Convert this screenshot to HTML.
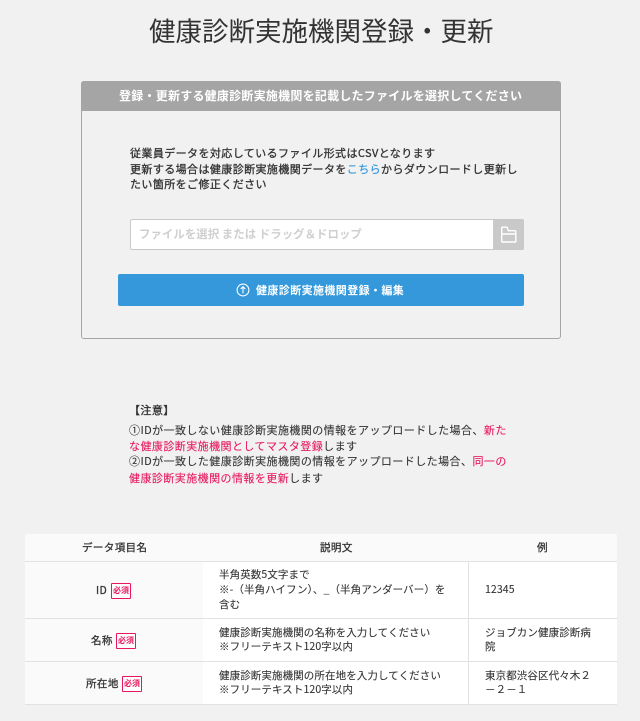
<!DOCTYPE html>
<html lang="ja"><head><meta charset="utf-8">
<style>
*{box-sizing:border-box}
html,body{margin:0;padding:0}
body{width:640px;height:721px;overflow:hidden;background:#f1f1f1;position:relative;font-family:"Noto Sans CJK JP","Liberation Sans",sans-serif;color:#333}
.a{position:absolute;white-space:nowrap}
.t{font-size:11px;letter-spacing:.41px;line-height:16px;height:16px}
.s{font-size:10.5px;letter-spacing:.1px;-webkit-text-stroke:.1px #333}
.b{-webkit-text-stroke:.3px #333}
.r{color:#e8175d;-webkit-text-stroke:.1px #e8175d}
.box{position:absolute;background:#fafafa}
.badge{position:absolute;width:20px;height:16px;border:1px solid #e8175d;border-radius:1px;background:#fff;color:#e8175d;font-size:8px;line-height:14px;text-align:center;font-weight:700;white-space:nowrap;overflow:hidden}
.h{position:absolute;background:#e2e2e2;height:1px;left:25px;width:592px}
</style></head><body>
<div class="a" style="left:149px;top:11px;font-size:26.5px;line-height:38px;color:#333">健康診断実施機関登録・更新</div>

<div class="a" style="left:81px;top:81px;width:480px;height:258px;border:1px solid #a5a5a5;border-radius:3px"></div>
<div class="a" style="left:81px;top:81px;width:480px;height:30px;background:#a5a5a5;border-radius:3px 3px 0 0"></div>
<div class="a" style="left:119px;top:87px;font-size:12px;letter-spacing:.24px;line-height:18px;color:#fff;font-weight:700">登録・更新する健康診断実施機関を記載したファイルを選択してください</div>

<div class="a t b" style="left:130px;top:145px">従業員データを対応しているファイル形式はCSVとなります</div>
<div class="a t b" style="left:130px;top:161px">更新する場合は健康診断実施機関データを<span style="color:#3498db;-webkit-text-stroke:.2px #3498db">こちら</span>からダウンロードし更新し</div>
<div class="a t b" style="left:130px;top:176px">たい箇所をご修正ください</div>

<div class="a" style="left:130px;top:219px;width:394px;height:31px;background:#fff;border:1px solid #c9c9c9;border-radius:2px"></div>
<div class="a" style="left:493px;top:219px;width:31px;height:31px;background:#c9c9c9;border-radius:0 2px 2px 0"></div>
<svg class="a" style="left:500px;top:226px" width="17" height="17" viewBox="0 0 17 17" fill="none" stroke="#fff" stroke-width="1.4" stroke-linejoin="round"><path d="M1.7 8V2C1.7 1.5 2 1.2 2.5 1.2H6.5C7 1.2 7.4 1.5 7.5 2L8.2 4.7H15C15.5 4.7 15.8 5 15.8 5.5V15.2C15.8 15.7 15.5 16 15 16H2.5C2 16 1.7 15.7 1.7 15.2V8H15.8"/></svg>
<div class="a" style="left:139px;top:226px;font-size:11.4px;letter-spacing:.06px;line-height:16px;color:#cfcfcf;font-weight:700">ファイルを選択 または ドラッグ＆ドロップ</div>

<div class="a" style="left:118px;top:274px;width:406px;height:32px;background:#3498db;border-radius:2px"></div>
<svg class="a" style="left:236px;top:283px" width="14" height="14" viewBox="0 0 14 14" fill="none" stroke="#fff" stroke-width="1.1"><circle cx="7" cy="7" r="5.9"/><path d="M7 10.4V3.8M4.7 6L7 3.7L9.3 6"/></svg>
<div class="a" style="left:256px;top:282px;font-size:11px;letter-spacing:.4px;line-height:16px;color:#fff;font-weight:700">健康診断実施機関登録・編集</div>

<div class="a t b" style="left:129px;top:402px">【注意】</div>
<div class="a t" style="left:129px;top:422px;letter-spacing:.44px;-webkit-text-stroke:.1px #333">①IDが一致しない健康診断実施機関の情報をアップロードした場合、<span class="r">新た</span></div>
<div class="a t" style="left:129px;top:438px;letter-spacing:.44px;-webkit-text-stroke:.1px #333"><span class="r">な健康診断実施機関としてマスタ登録</span>します</div>
<div class="a t" style="left:129px;top:453px;letter-spacing:.44px;-webkit-text-stroke:.1px #333">②IDが一致した健康診断実施機関の情報をアップロードした場合、<span class="r">同一の</span></div>
<div class="a t" style="left:129px;top:470px;letter-spacing:.44px;-webkit-text-stroke:.1px #333"><span class="r">健康診断実施機関の情報を更新</span>します</div>

<div class="box" style="left:25px;top:534px;width:592px;height:171px;background:#fafafa;border-radius:2px"></div>
<div class="box" style="left:203px;top:562px;width:414px;height:143px;background:#fff"></div>
<div class="h" style="top:561px"></div>
<div class="h" style="top:618px"></div>
<div class="h" style="top:661px"></div>
<div class="h" style="top:704px"></div>
<div class="a" style="left:468px;top:562px;width:1px;height:142px;background:#e2e2e2"></div>

<div class="a t b" style="left:82px;top:540px;font-size:10.5px">データ項目名</div>
<div class="a t b" style="left:320px;top:540px;font-size:10.5px">説明文</div>
<div class="a t b" style="left:537px;top:540px;font-size:10.5px">例</div>

<div class="a t b" style="left:96px;top:583px;font-size:10.5px">ID</div>
<div class="badge" style="left:111px;top:583px">必須</div>
<div class="a t b" style="left:91px;top:633px;font-size:10.5px">名称</div>
<div class="badge" style="left:116px;top:633px">必須</div>
<div class="a t b" style="left:86px;top:676px;font-size:10.5px">所在地</div>
<div class="badge" style="left:122px;top:676px">必須</div>

<div class="a t s" style="left:219px;top:567px">半角英数5文字まで</div>
<div class="a t s" style="left:219px;top:582px">※-（半角ハイフン）、_（半角アンダーバー）を</div>
<div class="a t s" style="left:219px;top:597px">含む</div>
<div class="a t s" style="left:219px;top:625px">健康診断実施機関の名称を入力してください</div>
<div class="a t s" style="left:219px;top:639px">※フリーテキスト120字以内</div>
<div class="a t s" style="left:219px;top:668px">健康診断実施機関の所在地を入力してください</div>
<div class="a t s" style="left:219px;top:682px">※フリーテキスト120字以内</div>

<div class="a t s" style="left:485px;top:582px">12345</div>
<div class="a t s" style="left:485px;top:625px">ジョブカン健康診断病</div>
<div class="a t s" style="left:485px;top:639px">院</div>
<div class="a t s" style="left:485px;top:668px">東京都渋谷区代々木２</div>
<div class="a t s" style="left:485px;top:682px">－２－１</div>
</body></html>
